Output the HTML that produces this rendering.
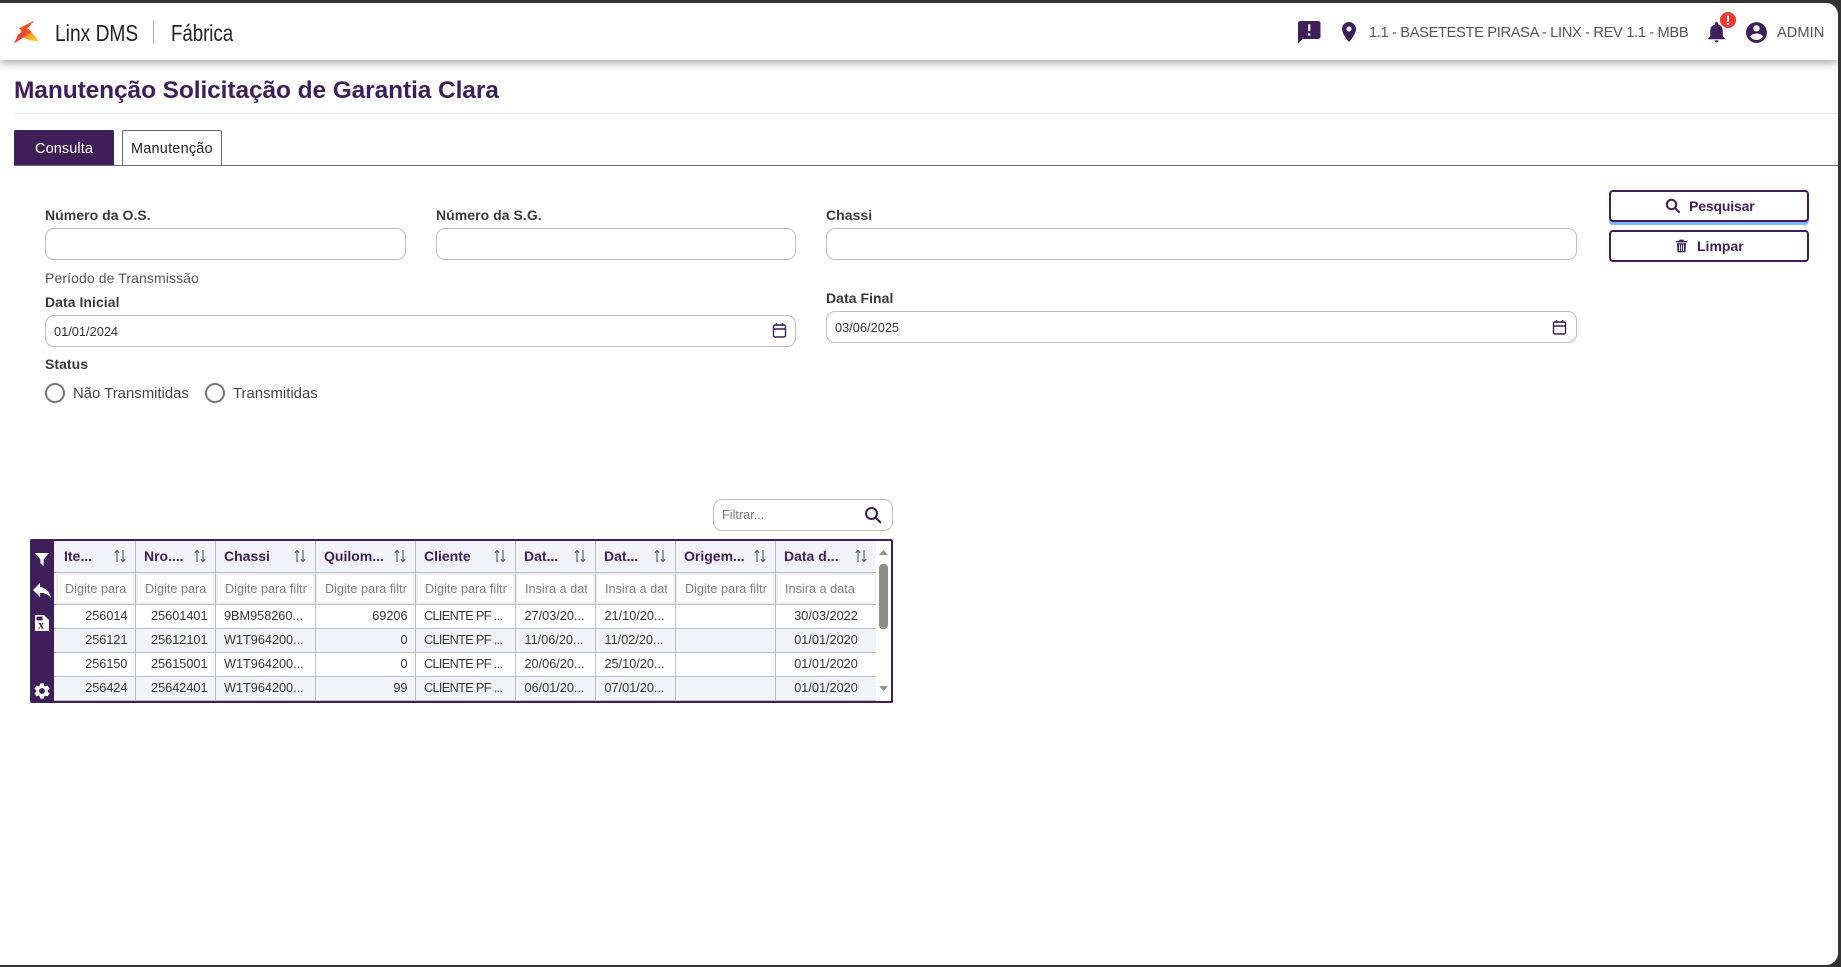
<!DOCTYPE html>
<html lang="pt-BR">
<head>
<meta charset="utf-8">
<title>Manutenção Solicitação de Garantia Clara</title>
<style>
html,body{margin:0;padding:0;background:#333;}
body{width:1841px;height:967px;overflow:hidden;position:relative;font-family:"Liberation Sans",sans-serif;color:#333;}
#page{position:absolute;left:0;top:3px;width:1838px;height:962px;background:#fff;border-radius:0 12px 12px 0;overflow:hidden;}
#wrap{position:absolute;left:0;top:-3px;width:1841px;height:967px;}
.t{position:absolute;white-space:nowrap;line-height:20px;}
.lb{font-size:14px;font-weight:bold;color:#3a3a3a;letter-spacing:.05px;}
.in{position:absolute;box-sizing:border-box;border:1px solid #bdbdbd;border-radius:9px;background:#fff;}
.ab{position:absolute;display:block;}
#hdr{position:absolute;left:0;top:3px;width:1838px;height:57px;background:#fff;box-shadow:0 3px 9px rgba(0,0,0,.35);border-radius:0 12px 0 0;}
.radio{position:absolute;box-sizing:border-box;width:20px;height:20px;border:2px solid #777;border-radius:50%;top:383px;background:#fff;}
.btn{position:absolute;box-sizing:border-box;left:1609px;width:200px;border:2px solid #401e5a;border-radius:4px;background:#fff;}
#frame{position:absolute;left:30px;top:539px;width:863px;height:164px;background:#401e5a;border-radius:2px;}
#inner{position:absolute;left:24px;top:2px;width:837px;height:160px;background:#fff;overflow:hidden;}
table{position:absolute;left:0;top:0;border-collapse:separate;border-spacing:0;table-layout:fixed;width:822px;font-size:12.7px;color:#333;}
td{box-sizing:border-box;border-right:1px solid #bdbdbd;border-bottom:1px solid #bdbdbd;padding:0 7.5px 2px;white-space:nowrap;overflow:hidden;height:24px;line-height:20px;}
td:last-child{border-right:0;}
tr.h td{height:32px;background:#f1f3f8;font-weight:bold;font-size:14px;color:#401e5a;padding:0 0 0 8px;position:relative;line-height:29px;}
tr.h td:first-child{padding-left:10px;}
tr.f td{height:32px;padding:0;background:#fff;}
tr.f div{box-sizing:border-box;height:31px;border:2px solid #f0f0f0;padding-left:7px;font-size:12.7px;line-height:29px;color:#7d7d7d;overflow:hidden;white-space:nowrap;}
tr.f div span{display:block;overflow:hidden;margin-right:6px;}
tr.f td:first-child div{margin-left:2px;}
tr.o td{background:#f1f3f8;}
.r{text-align:right;}
.c{text-align:center;}
.l{padding-left:8px !important;}
.d{padding-left:8.5px !important;}
.k{padding-left:8px !important;letter-spacing:-.65px;}
.s{position:absolute;right:9px;top:8px;width:12px;height:14px;}
</style>
</head>
<body>
<div id="page"><div id="wrap">

<div class="t" style="left:14px;top:79px;line-height:24px;font-size:24.5px;font-weight:bold;color:#401e5a;letter-spacing:-.1px;">Manutenção Solicitação de Garantia Clara</div>
<div class="ab" style="left:14px;top:113px;width:1824px;height:1px;background:#e6e6e6;"></div>

<div class="ab" style="left:14px;top:130px;width:100px;height:36px;background:#401e5a;border-radius:2px 2px 0 0;"></div>
<div class="t" style="left:35px;top:139px;font-size:14.5px;color:#fff;letter-spacing:.1px;">Consulta</div>
<div class="ab" style="left:122px;top:130px;width:100px;height:36px;box-sizing:border-box;border:1px solid #666;border-bottom:0;border-radius:2px 2px 0 0;background:#fff;"></div>
<div class="t" style="left:131px;top:139px;font-size:14.5px;color:#222;letter-spacing:.2px;">Manutenção</div>
<div class="ab" style="left:14px;top:165px;width:1824px;height:1px;background:#6d6d6d;"></div>

<div class="t lb" style="left:45px;top:205px;">Número da O.S.</div>
<div class="in" style="left:45px;top:228px;width:361px;height:32px;"></div>
<div class="t lb" style="left:436px;top:205px;">Número da S.G.</div>
<div class="in" style="left:436px;top:228px;width:360px;height:32px;"></div>
<div class="t lb" style="left:826px;top:205px;">Chassi</div>
<div class="in" style="left:826px;top:228px;width:751px;height:32px;"></div>

<div class="t" style="left:45px;top:268px;font-size:14px;color:#555;letter-spacing:.1px;">Período de Transmissão</div>
<div class="t lb" style="left:45px;top:292px;">Data Inicial</div>
<div class="in" style="left:45px;top:315px;width:751px;height:32px;"></div>
<div class="t" style="left:54px;top:321.5px;font-size:12.8px;color:#333;">01/01/2024</div>
<svg class="ab" style="left:771.5px;top:322px;" width="15" height="16" viewBox="0 0 15 16" fill="none" stroke="#401e5a" stroke-width="1.4"><rect x="1.5" y="3" width="12" height="12" rx="1.5"/><path d="M1.5 7h12M4.5 1v3M10.5 1v3"/></svg>

<div class="t lb" style="left:826px;top:288px;">Data Final</div>
<div class="in" style="left:826px;top:311px;width:751px;height:32px;"></div>
<div class="t" style="left:835px;top:318px;font-size:12.8px;color:#333;">03/06/2025</div>
<svg class="ab" style="left:1552px;top:319px;" width="15" height="16" viewBox="0 0 15 16" fill="none" stroke="#401e5a" stroke-width="1.4"><rect x="1.5" y="3" width="12" height="12" rx="1.5"/><path d="M1.5 7h12M4.5 1v3M10.5 1v3"/></svg>

<div class="t lb" style="left:45px;top:354px;">Status</div>
<div class="radio" style="left:45px;"></div>
<div class="t" style="left:73px;top:384px;font-size:14.9px;color:#444;">Não Transmitidas</div>
<div class="radio" style="left:205px;"></div>
<div class="t" style="left:233px;top:384px;font-size:14.9px;color:#444;">Transmitidas</div>

<div class="ab" style="left:1609px;top:192px;width:200px;height:33px;background:#7db9ff;border-radius:4px;"></div>
<div class="btn" style="top:190px;height:32px;"></div>
<svg class="ab" style="left:1665px;top:198px;" width="15" height="15" viewBox="0 0 15 15" fill="none" stroke="#401e5a" stroke-width="2"><circle cx="6.5" cy="6.5" r="4.7"/><path d="M10 10l4 4" stroke-linecap="round"/></svg>
<div class="t" style="left:1689px;top:196px;font-size:14px;font-weight:bold;color:#401e5a;letter-spacing:-.15px;">Pesquisar</div>
<div class="btn" style="top:230px;height:32px;"></div>
<svg class="ab" style="left:1676px;top:239px;" width="11" height="14" viewBox="0 0 12 14"><path fill="#401e5a" d="M4 0h4l1 1.5h3V3H0V1.5h3zM1 4h10l-.7 10H1.7zM3.4 5.5v7h1v-7zm2.1 0v7h1v-7zm2.1 0v7h1v-7z"/></svg>
<div class="t" style="left:1697px;top:236px;font-size:14px;font-weight:bold;color:#401e5a;">Limpar</div>

<div class="in" style="left:713px;top:499px;width:180px;height:32px;"></div>
<div class="t" style="left:722px;top:505px;font-size:12.7px;color:#777;">Filtrar...</div>
<svg class="ab" style="left:864px;top:506px;" width="18" height="18" viewBox="0 0 18 18" fill="none" stroke="#401e5a" stroke-width="2"><circle cx="7.5" cy="7.5" r="5.5"/><path d="M11.5 11.5l5.5 5.5"/></svg>

<div id="frame">
 <div id="inner">
 <table>
 <colgroup><col style="width:82px"><col style="width:80px"><col style="width:100px"><col style="width:100px"><col style="width:100px"><col style="width:80px"><col style="width:80px"><col style="width:100px"><col style="width:100px"></colgroup>
 <tr class="h">
  <td>Ite...<svg class="s" viewBox="0 0 12 14" fill="none" stroke="#555" stroke-width="1.1"><path d="M3 13V1.5M.8 3.8L3 1.5l2.2 2.3M9 1v11.5M6.8 10.2L9 12.5l2.2-2.3"/></svg></td>
  <td>Nro....<svg class="s" viewBox="0 0 12 14" fill="none" stroke="#555" stroke-width="1.1"><path d="M3 13V1.5M.8 3.8L3 1.5l2.2 2.3M9 1v11.5M6.8 10.2L9 12.5l2.2-2.3"/></svg></td>
  <td>Chassi<svg class="s" viewBox="0 0 12 14" fill="none" stroke="#555" stroke-width="1.1"><path d="M3 13V1.5M.8 3.8L3 1.5l2.2 2.3M9 1v11.5M6.8 10.2L9 12.5l2.2-2.3"/></svg></td>
  <td>Quilom...<svg class="s" viewBox="0 0 12 14" fill="none" stroke="#555" stroke-width="1.1"><path d="M3 13V1.5M.8 3.8L3 1.5l2.2 2.3M9 1v11.5M6.8 10.2L9 12.5l2.2-2.3"/></svg></td>
  <td>Cliente<svg class="s" viewBox="0 0 12 14" fill="none" stroke="#555" stroke-width="1.1"><path d="M3 13V1.5M.8 3.8L3 1.5l2.2 2.3M9 1v11.5M6.8 10.2L9 12.5l2.2-2.3"/></svg></td>
  <td>Dat...<svg class="s" viewBox="0 0 12 14" fill="none" stroke="#555" stroke-width="1.1"><path d="M3 13V1.5M.8 3.8L3 1.5l2.2 2.3M9 1v11.5M6.8 10.2L9 12.5l2.2-2.3"/></svg></td>
  <td>Dat...<svg class="s" viewBox="0 0 12 14" fill="none" stroke="#555" stroke-width="1.1"><path d="M3 13V1.5M.8 3.8L3 1.5l2.2 2.3M9 1v11.5M6.8 10.2L9 12.5l2.2-2.3"/></svg></td>
  <td>Origem...<svg class="s" viewBox="0 0 12 14" fill="none" stroke="#555" stroke-width="1.1"><path d="M3 13V1.5M.8 3.8L3 1.5l2.2 2.3M9 1v11.5M6.8 10.2L9 12.5l2.2-2.3"/></svg></td>
  <td>Data d...<svg class="s" viewBox="0 0 12 14" fill="none" stroke="#555" stroke-width="1.1"><path d="M3 13V1.5M.8 3.8L3 1.5l2.2 2.3M9 1v11.5M6.8 10.2L9 12.5l2.2-2.3"/></svg></td>
 </tr>
 <tr class="f">
  <td><div><span>Digite para filtrar</span></div></td><td><div><span>Digite para filtrar</span></div></td><td><div><span>Digite para filtrar</span></div></td><td><div><span>Digite para filtrar</span></div></td><td><div><span>Digite para filtrar</span></div></td><td><div><span>Insira a data</span></div></td><td><div><span>Insira a data</span></div></td><td><div><span>Digite para filtrar</span></div></td><td><div><span>Insira a data</span></div></td>
 </tr>
 <tr><td class="r">256014</td><td class="r">25601401</td><td class="l">9BM958260...</td><td class="r">69206</td><td class="k">CLIENTE PF ...</td><td class="d">27/03/20...</td><td class="d">21/10/20...</td><td></td><td class="c">30/03/2022</td></tr>
 <tr class="o"><td class="r">256121</td><td class="r">25612101</td><td class="l">W1T964200...</td><td class="r">0</td><td class="k">CLIENTE PF ...</td><td class="d">11/06/20...</td><td class="d">11/02/20...</td><td></td><td class="c">01/01/2020</td></tr>
 <tr><td class="r">256150</td><td class="r">25615001</td><td class="l">W1T964200...</td><td class="r">0</td><td class="k">CLIENTE PF ...</td><td class="d">20/06/20...</td><td class="d">25/10/20...</td><td></td><td class="c">01/01/2020</td></tr>
 <tr class="o"><td class="r">256424</td><td class="r">25642401</td><td class="l">W1T964200...</td><td class="r">99</td><td class="k">CLIENTE PF ...</td><td class="d">06/01/20...</td><td class="d">07/01/20...</td><td></td><td class="c">01/01/2020</td></tr>
 </table>
 </div>
</div>

<svg class="ab" style="left:35px;top:552px;" width="14" height="14" viewBox="0 0 14 14"><path fill="#fff" d="M0 1h14L8.6 7.5V14L5.4 11.5V7.5z"/></svg>
<svg class="ab" style="left:33px;top:582px;" width="18" height="18" viewBox="3 4 18 18"><path fill="#fff" d="M10 9V5l-7 7 7 7v-4.1c5 0 8.5 1.6 11 5.1-1-5-4-10-11-11z"/></svg>
<svg class="ab" style="left:35px;top:615px;" width="14" height="16" viewBox="0 0 14 16"><path fill="#fff" d="M0 0h9l5 5v11H0z"/><path fill="#401e5a" d="M1.6 1.6h6v3.8H1.6z"/><text x="3.2" y="13.6" font-family="Liberation Serif,serif" font-size="11.5" font-weight="bold" fill="#401e5a">x</text></svg>
<svg class="ab" style="left:34px;top:683px;" width="16" height="16" viewBox="2 2 20 20"><path fill="#fff" d="M19.14 12.94c.04-.3.06-.61.06-.94 0-.32-.02-.64-.07-.94l2.03-1.58c.18-.14.23-.41.12-.61l-1.92-3.32c-.12-.22-.37-.29-.59-.22l-2.39.96c-.5-.38-1.03-.7-1.62-.94l-.36-2.54c-.04-.24-.24-.41-.48-.41h-3.84c-.24 0-.43.17-.47.41l-.36 2.54c-.59.24-1.13.57-1.62.94l-2.39-.96c-.22-.08-.47 0-.59.22L2.74 8.87c-.12.21-.08.47.12.61l2.03 1.58c-.05.3-.09.63-.09.94s.02.64.07.94l-2.03 1.58c-.18.14-.23.41-.12.61l1.92 3.32c.12.22.37.29.59.22l2.39-.96c.5.38 1.03.7 1.62.94l.36 2.54c.05.24.24.41.48.41h3.84c.24 0 .44-.17.47-.41l.36-2.54c.59-.24 1.13-.56 1.62-.94l2.39.96c.22.08.47 0 .59-.22l1.92-3.32c.12-.22.07-.47-.12-.61l-2.01-1.58zM12 15.6c-1.98 0-3.6-1.62-3.6-3.6s1.62-3.6 3.6-3.6 3.6 1.62 3.6 3.6-1.62 3.6-3.6 3.6z"/></svg>

<svg class="ab" style="left:878px;top:549px;" width="11" height="8" viewBox="0 0 11 8"><path fill="#909090" d="M5.5 1L10 6H1z"/></svg>
<div class="ab" style="left:879px;top:564px;width:9px;height:65px;background:#8d8d8d;border-radius:4px;"></div>
<svg class="ab" style="left:878px;top:684px;" width="11" height="8" viewBox="0 0 11 8"><path fill="#909090" d="M1 2h9L5.5 7z"/></svg>

<div id="hdr"></div>
<svg class="ab" style="left:14px;top:20px;" width="26" height="24" viewBox="0 0 26 24">
<defs>
<linearGradient id="g1" x1="0" y1="1" x2="1" y2="0"><stop offset="0" stop-color="#e8362d"/><stop offset="1" stop-color="#f4682a"/></linearGradient>
<linearGradient id="g2" x1="0" y1="0" x2="1" y2="1"><stop offset="0" stop-color="#f26a26"/><stop offset="1" stop-color="#ffd21f"/></linearGradient>
</defs>
<path fill="url(#g2)" d="M6 8.5L15 9 25 21.5 15 20 9 17z"/>
<path fill="url(#g1)" d="M21 0L13 9 18 12 0 23.5 4 15 8.5 11 5 8.5z"/>
</svg>
<div class="t" style="left:55px;top:21px;line-height:24px;font-size:23px;color:#222;transform:scaleX(.835);transform-origin:0 50%;">Linx DMS</div>
<div class="ab" style="left:153px;top:20px;width:1px;height:24px;background:#aaa;"></div>
<div class="t" style="left:171px;top:21px;line-height:24px;font-size:23px;color:#222;transform:scaleX(.81);transform-origin:0 50%;">Fábrica</div>

<svg class="ab" style="left:1298px;top:21px;" width="22.5" height="22.5" viewBox="2 2 20 20"><path fill="#401e5a" d="M20 2H4c-1.1 0-1.99.9-1.99 2L2 22l4-4h14c1.1 0 2-.9 2-2V4c0-1.1-.9-2-2-2zm-7 9h-2V5h2v6zm0 4h-2v-2h2v2z"/></svg>
<svg class="ab" style="left:1339px;top:22px;" width="20" height="20" viewBox="2 2 20 20"><path fill="#401e5a" d="M12 2C8.13 2 5 5.13 5 9c0 5.25 7 13 7 13s7-7.75 7-13c0-3.87-3.13-7-7-7zm0 9.5c-1.38 0-2.5-1.12-2.5-2.5s1.12-2.5 2.5-2.5 2.5 1.12 2.5 2.5-1.12 2.5-2.5 2.5z"/></svg>
<div class="t" style="left:1369px;top:22.5px;font-size:14.7px;color:#555;letter-spacing:-.36px;">1.1 - BASETESTE PIRASA - LINX - REV 1.1 - MBB</div>
<svg class="ab" style="left:1705px;top:21px;" width="23" height="23" viewBox="1 1.5 22 22"><path fill="#401e5a" d="M12 22c1.1 0 2-.9 2-2h-4c0 1.1.89 2 2 2zm6-6v-5c0-3.07-1.64-5.64-4.5-6.32V4c0-.83-.67-1.5-1.5-1.5s-1.5.67-1.5 1.5v.68C7.63 5.36 6 7.92 6 11v5l-2 2v1h16v-1l-2-2z"/></svg>
<div class="ab" style="left:1720px;top:12px;width:16px;height:16px;border-radius:50%;background:#f0392f;"></div>
<div class="ab" style="left:1727px;top:14.5px;width:2px;height:7px;background:#fff;border-radius:1px;"></div>
<div class="ab" style="left:1727px;top:23px;width:2px;height:2px;background:#fff;"></div>
<svg class="ab" style="left:1744px;top:19.5px;" width="25" height="25" viewBox="0 0 24 24"><path fill="#401e5a" d="M12 2C6.48 2 2 6.48 2 12s4.48 10 10 10 10-4.48 10-10S17.52 2 12 2zm0 3c1.66 0 3 1.34 3 3s-1.34 3-3 3-3-1.34-3-3 1.34-3 3-3zm0 14.2c-2.5 0-4.71-1.28-6-3.22.03-1.99 4-3.08 6-3.08 1.99 0 5.97 1.09 6 3.08-1.29 1.94-3.5 3.22-6 3.22z"/></svg>
<div class="t" style="left:1777px;top:22.5px;font-size:14.7px;color:#555;">ADMIN</div>

</div></div>
</body>
</html>
